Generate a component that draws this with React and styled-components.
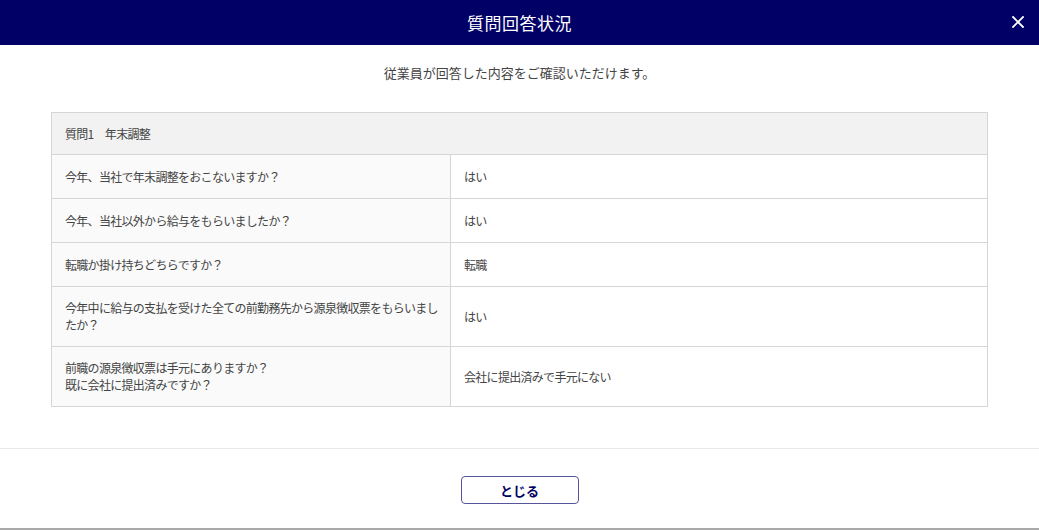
import React from 'react';
import styled, { createGlobalStyle } from 'styled-components';

const GlobalStyle = createGlobalStyle`
  html, body {
    margin: 0;
    padding: 0;
    background: #fff;
    font-family: "Noto Sans CJK JP", "Noto Sans", sans-serif;
  }
`;

const rows = [
  { q: '今年、当社で年末調整をおこないますか？', a: 'はい' },
  { q: '今年、当社以外から給与をもらいましたか？', a: 'はい' },
  { q: '転職か掛け持ちどちらですか？', a: '転職' },
  { q: '今年中に給与の支払を受けた全ての前勤務先から源泉徴収票をもらいましたか？', a: 'はい', multi: true },
  { q: '前職の源泉徴収票は手元にありますか？\n既に会社に提出済みですか？', a: '会社に提出済みで手元にない', multi: true },
];

function App() {
  return (
    <>
      <GlobalStyle />
      <Modal>
        <Header>
          <Title>質問回答状況</Title>
          <CloseButton aria-label="close">
            <svg width="12" height="12" viewBox="0 0 12 12">
              <path d="M1 1L11 11M11 1L1 11" stroke="#fff" strokeWidth="1.8" strokeLinecap="square" />
            </svg>
          </CloseButton>
        </Header>
        <Body>
          <Lead>従業員が回答した内容をご確認いただけます。</Lead>
          <Table>
            <colgroup>
              <QuestionCol />
              <col />
            </colgroup>
            <tbody>
              <tr>
                <HeadCell colSpan={2}>質問1　年末調整</HeadCell>
              </tr>
              {rows.map((r) => (
                <tr key={r.q}>
                  <QCell $multi={r.multi}>{r.q}</QCell>
                  <ACell>{r.a}</ACell>
                </tr>
              ))}
            </tbody>
          </Table>
        </Body>
        <Footer>
          <CloseBtn>とじる</CloseBtn>
        </Footer>
      </Modal>
    </>
  );
}

const Modal = styled.div`
  width: 100%;
  height: 530px;
  box-sizing: border-box;
  border-bottom: 2px solid #a9a9a9;
  display: flex;
  flex-direction: column;
`;

const Header = styled.div`
  height: 45px;
  background-color: #000066;
  display: flex;
  align-items: center;
  justify-content: center;
  position: relative;
  flex-shrink: 0;
`;

const Title = styled.h1`
  margin: 0;
  color: #fff;
  font-size: 17px;
  font-weight: 400;
  letter-spacing: 0.5px;
`;

const CloseButton = styled.button`
  position: absolute;
  right: 14px;
  top: 15px;
  width: 14px;
  height: 14px;
  padding: 0;
  border: none;
  background: none;
  display: flex;
  align-items: center;
  justify-content: center;
  cursor: pointer;
`;

const Body = styled.div`
  padding: 19px 51px 41px;
  border-bottom: 1px solid #e9e9e9;
`;

const Lead = styled.p`
  margin: 0 0 30px;
  text-align: center;
  font-size: 13px;
  line-height: 18px;
  color: #444;
`;

const Table = styled.table`
  width: 100%;
  border-collapse: collapse;
  table-layout: fixed;
  font-size: 12px;
  color: #444;
  line-height: 17px;
  letter-spacing: -0.7px;
  border: 1px solid #d6d6d6;
`;

const QuestionCol = styled.col`
  width: 399px;
`;

const HeadCell = styled.td`
  background-color: #f2f2f2;
  padding: 12px 13px 12px;
  border: 1px solid #d6d6d6;
`;

const QCell = styled.td`
  background-color: #fafafa;
  padding: ${(p) => (p.$multi ? '12px' : '13px')} 12px 13px 13px;
  border: 1px solid #d6d6d6;
  white-space: pre-line;
  vertical-align: middle;
`;

const ACell = styled.td`
  background-color: #fff;
  padding: 13px 13px;
  border: 1px solid #d6d6d6;
  vertical-align: middle;
`;

const Footer = styled.div`
  flex: 1;
  display: flex;
  justify-content: center;
  padding-top: 27px;
`;

const CloseBtn = styled.button`
  width: 118px;
  height: 28px;
  border: 1px solid #55559a;
  border-radius: 4px;
  background: #fff;
  color: #000066;
  font-family: "Noto Sans CJK JP", sans-serif;
  font-size: 13px;
  font-weight: 700;
  cursor: pointer;
`;

export default App;
